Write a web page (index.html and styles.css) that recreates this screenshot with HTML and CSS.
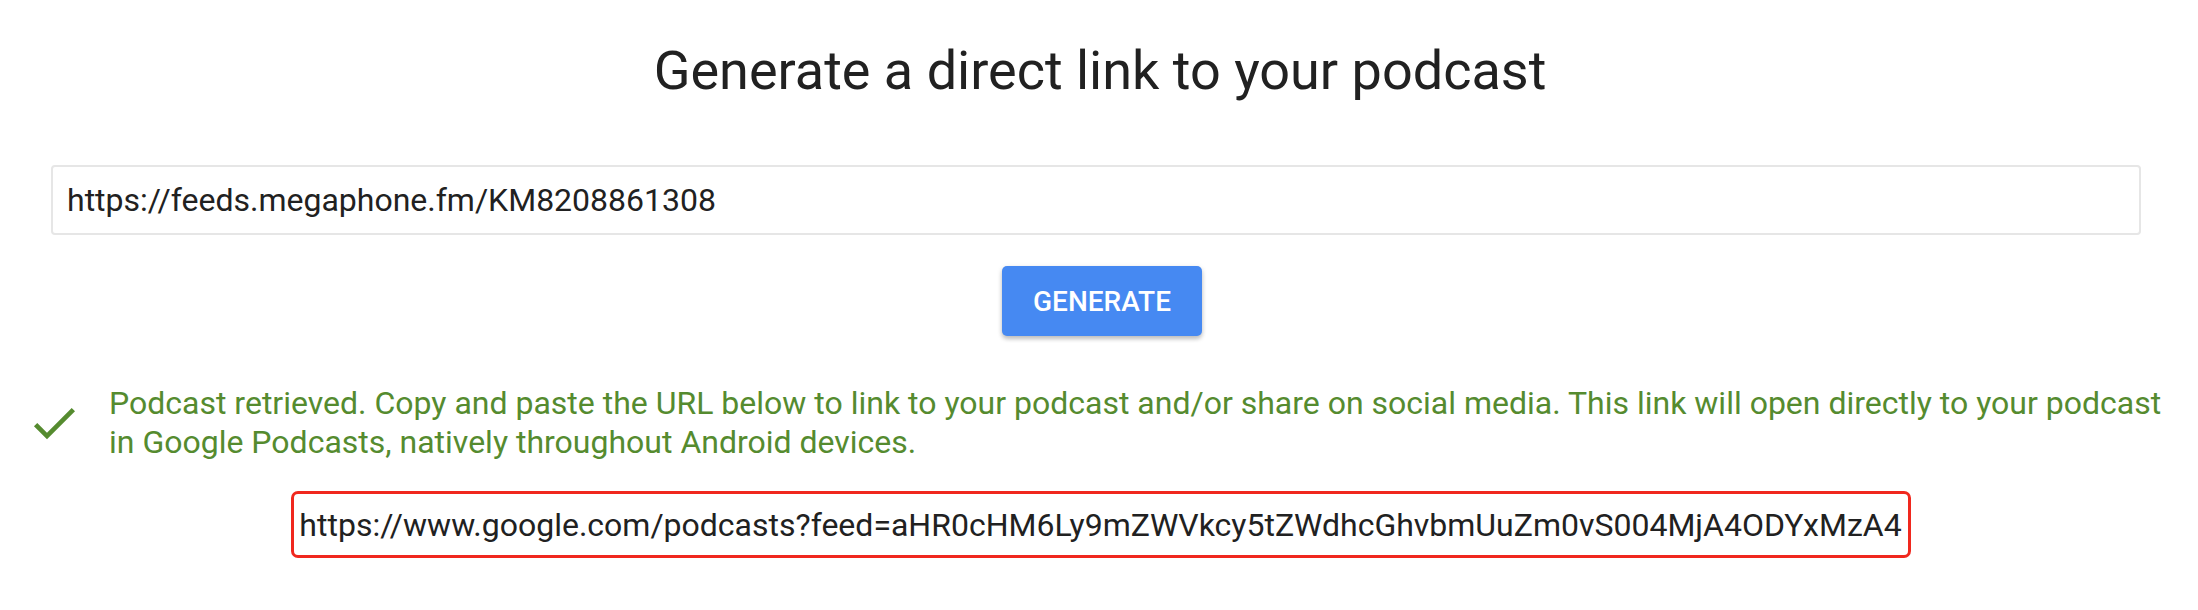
FILE: index.html
```html
<!DOCTYPE html>
<html lang="en">
<head>
<meta charset="utf-8">
<title>Generate a direct link to your podcast</title>
<link rel="stylesheet" href="styles.css">
</head>
<body>
<main class="page">
  <h1 class="title">Generate a direct link to your podcast</h1>
  <div class="field">
    <input class="feed-input" type="text" value="https://feeds.megaphone.fm/KM8208861308">
  </div>
  <div class="actions">
    <button class="btn-generate" type="button">GENERATE</button>
  </div>
  <div class="status">
    <svg class="status-icon" viewBox="0 0 24 24" width="56" height="56" aria-hidden="true">
      <path d="M9 16.17L4.83 12l-1.42 1.41L9 19 21 7l-1.41-1.41z" fill="#558b2f"/>
    </svg>
    <p class="status-text">Podcast retrieved. Copy and paste the URL below to link to your podcast and/or share on social media. This link will open directly to your podcast in Google Podcasts, natively throughout Android devices.</p>
  </div>
  <div class="result">
    <div class="result-link">https://www.google.com/podcasts?feed=aHR0cHM6Ly9mZWVkcy5tZWdhcGhvbmUuZm0vS004MjA4ODYxMzA4</div>
  </div>
</main>
</body>
</html>
```

FILE: styles.css
```css
* {
  box-sizing: border-box;
}

html, body {
  margin: 0;
  padding: 0;
  background: #ffffff;
}

body {
  font-family: Roboto, "Liberation Sans", Arial, sans-serif;
  color: #212121;
}

.page {
  display: flex;
  flex-direction: column;
  align-items: stretch;
  padding-top: 39px;
}

.title {
  margin: 0;
  font-size: 54px;
  line-height: 64px;
  font-weight: 400;
  text-align: center;
  color: #212121;
  padding-left: 2px;
}

.field {
  margin-top: 62px;
  padding: 0 57px 0 51px;
}

.feed-input {
  display: block;
  width: 100%;
  height: 70px;
  border: 2px solid #e6e6e6;
  border-radius: 4px;
  padding: 0 14px;
  font-family: Roboto, "Liberation Sans", Arial, sans-serif;
  font-size: 32px;
  color: #212121;
  background: #fff;
  outline: none;
}

.actions {
  margin-top: 31px;
  display: flex;
  justify-content: center;
  padding-left: 6px;
}

.btn-generate {
  width: 200px;
  height: 70px;
  border: none;
  border-radius: 5px;
  background: #4689f2;
  color: #ffffff;
  font-family: Roboto, "Liberation Sans", Arial, sans-serif;
  font-size: 28px;
  font-weight: 500;
  letter-spacing: 0;
  box-shadow: 0 3px 4px rgba(0, 0, 0, 0.22), 0 1px 6px rgba(0, 0, 0, 0.08);
  cursor: pointer;
}

.status {
  margin-top: 48px;
  display: flex;
  align-items: center;
  gap: 27px;
  padding: 0 20px 0 26px;
}

.status-icon {
  flex: 0 0 56px;
  display: block;
}

.status-text {
  margin: 0;
  font-size: 32px;
  line-height: 39px;
  color: #558b2f;
}

.result {
  margin-top: 29px;
  display: flex;
  justify-content: center;
  padding-left: 4px;
}

.result-link {
  border: 3px solid #f0281e;
  border-radius: 7px;
  height: 67px;
  padding: 0 6px 0 5px;
  display: flex;
  align-items: center;
  font-size: 32px;
  color: #212121;
  white-space: nowrap;
}
```
